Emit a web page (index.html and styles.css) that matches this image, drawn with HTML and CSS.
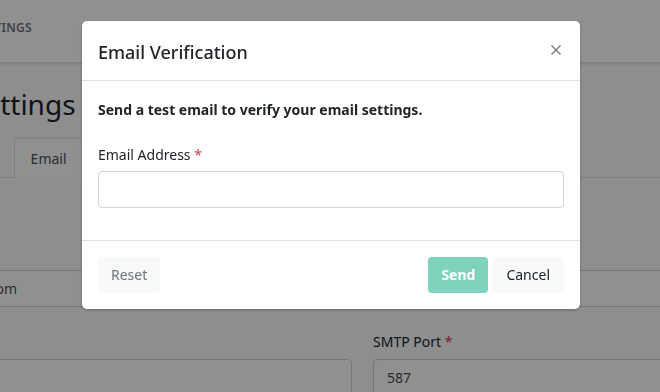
FILE: index.html
```html
<!DOCTYPE html>
<html lang="en">
<head>
<meta charset="utf-8">
<title>Email Verification</title>
<link rel="stylesheet" href="styles.css">
</head>
<body>
<div class="page">
  <header class="topbar">
    <nav class="nav"><a class="nav-link">Settings</a></nav>
  </header>
  <main class="content">
    <h1 class="title">Settings</h1>
    <div class="tabs">
      <div class="tab">General</div>
      <div class="tab active">Email</div>
    </div>
    <form class="form">
      <div class="group full">
        <label class="label">From Email <span class="req">*</span></label>
        <div class="input shifted">no-reply@yourdomain.com</div>
      </div>
      <div class="row">
        <div class="group">
          <label class="label">SMTP Host <span class="req">*</span></label>
          <div class="input">smtp.yourdomain.com</div>
        </div>
        <div class="group">
          <label class="label">SMTP Port <span class="req">*</span></label>
          <div class="input">587</div>
        </div>
      </div>
    </form>
  </main>
</div>

<div class="backdrop">
  <div class="modal">
    <div class="modal-header">
      <h2 class="modal-title">Email Verification</h2>
      <button class="close" type="button" aria-label="Close">
        <svg width="10" height="10" viewBox="0 0 10 10"><path d="M0.5 0.5 L9.5 9.5 M9.5 0.5 L0.5 9.5" stroke="#7a7a7a" stroke-width="1.4" fill="none"/></svg>
      </button>
    </div>
    <div class="modal-body">
      <p class="lead">Send a test email to verify your email settings.</p>
      <label class="m-label">Email Address <span class="req">*</span></label>
      <div class="m-input"></div>
    </div>
    <div class="modal-footer">
      <button class="btn btn-light muted" type="button">Reset</button>
      <div class="spacer"></div>
      <button class="btn btn-send" type="button">Send</button>
      <button class="btn btn-light btn-cancel" type="button">Cancel</button>
    </div>
  </div>
</div>
</body>
</html>
```

FILE: styles.css
```css
* { box-sizing: border-box; }
html, body { margin: 0; padding: 0; }
body {
  font-family: "Noto Sans", "Open Sans", sans-serif;
  font-size: 14px;
  color: #212529;
  background: #fbfbfb;
  width: 660px;
  height: 392px;
  overflow: hidden;
}
.page {
  margin-left: -200px;
  width: 1100px;
}
.topbar {
  height: 62px;
  background: #ffffff;
  box-shadow: 0 1px 4px rgba(0,0,0,0.18);
  padding-left: 173px;
  padding-top: 17px;
}
.nav-link {
  font-size: 12px;
  font-weight: 600;
  letter-spacing: 0.3px;
  text-transform: uppercase;
  color: #6c757d;
  line-height: 16px;
}
.content { padding-left: 30px; }
.title {
  margin: 25px 0 0 139px;
  font-size: 28px;
  font-weight: 400;
  line-height: 34px;
  color: #212529;
}
.tabs {
  display: flex;
  margin-top: 17px;
  border-bottom: 1px solid #dee2e6;
  padding-left: 98px;
}
.tab {
  height: 39px;
  padding: 0 16px;
  line-height: 39px;
  color: #495057;
  border: 1px solid transparent;
  border-bottom: none;
  margin-bottom: -1px;
  border-radius: 4px 4px 0 0;
}
.tab.active {
  background: #fff;
  border-color: #dee2e6;
  height: 40px;
}
.form {
  padding-top: 64px;
  width: 1065px;
}
.group { margin-bottom: 24px; }
.label {
  display: block;
  line-height: 21px;
  margin-bottom: 7px;
  color: #212529;
}
.req { color: #dc3545; }
.input {
  height: 37px;
  border: 1px solid #ced4da;
  border-radius: 4px;
  background: #fff;
  padding: 0 13px;
  line-height: 35px;
  color: #495057;
}
.input.shifted { padding-left: 7px; }
.row {
  display: grid;
  grid-template-columns: 1fr 1fr;
  column-gap: 21px;
}

.backdrop {
  position: fixed;
  inset: 0;
  background: rgba(0,0,0,0.435);
}
.modal {
  margin: 21px 0 0 82px;
  width: 498px;
  background: #fff;
  border-radius: 5px;
  box-shadow: 0 1px 3px rgba(0,0,0,0.25);
}
.modal-header {
  display: flex;
  align-items: center;
  height: 60px;
  padding: 0 16px;
  border-bottom: 1px solid #dee2e6;
}
.modal-title {
  flex: 1;
  margin: 0;
  font-size: 18px;
  font-weight: 500;
  line-height: 24px;
  color: #212529;
  padding-top: 2px;
}
.close {
  border: 0;
  background: none;
  padding: 0;
  margin-right: 3px;
  margin-top: -2px;
  width: 10px;
  height: 10px;
  display: flex;
}
.modal-body {
  padding: 18px 16px 32px;
}
.lead {
  margin: 0 0 24px;
  font-weight: 700;
  line-height: 21px;
  color: #212529;
}
.m-label {
  display: block;
  line-height: 21px;
  margin-bottom: 6px;
}
.m-input {
  height: 37px;
  border: 1px solid #ced4da;
  border-radius: 4px;
}
.modal-footer {
  display: flex;
  align-items: center;
  gap: 4px;
  padding: 16px;
  border-top: 1px solid #dee2e6;
}
.spacer { flex: 1; }
.btn {
  height: 36px;
  border: 0;
  border-radius: 4px;
  font-family: inherit;
  font-size: 14px;
  padding: 0 13px;
  line-height: 36px;
}
.btn-light { background: #f8f9fa; color: #212529; }
.btn-light.muted { color: #6c757d; }
.btn-cancel { padding: 0 14px; }
.btn-send {
  background: #7ed3bc;
  color: #fff;
  font-weight: 700;
  padding: 0 13px;
}
```
